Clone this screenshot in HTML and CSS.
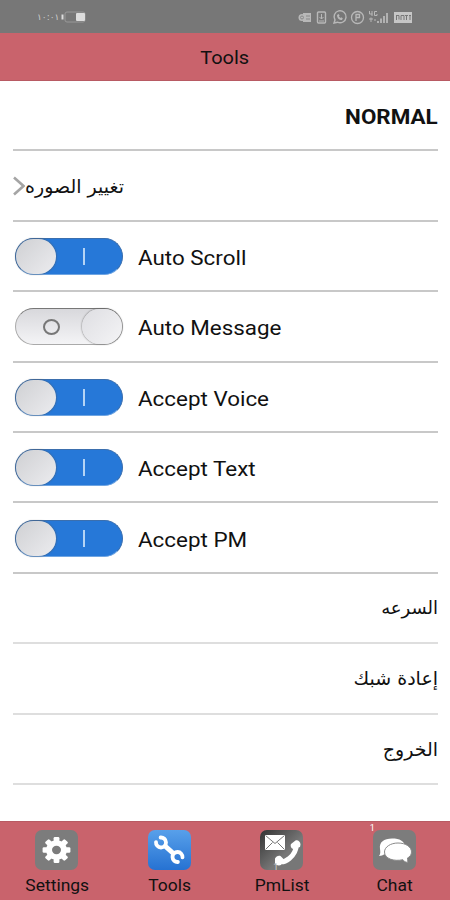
FILE: index.html
```html
<!DOCTYPE html>
<html lang="ar">
<head>
    <meta charset="UTF-8">
    <meta name="viewport" content="width=device-width, initial-scale=1.0">
    <title>Tools</title>
    <link rel="stylesheet" href="styles.css">
</head>
<body>
    <div class="status-bar">
        <div class="status-left">
            <span class="time">١٠:٠١</span>
            <svg class="battery" width="26" height="12" viewBox="0 0 26 12">
                <path d="M1.500 3.500v5" stroke="#ddd" stroke-width="2"/>
                <rect x="4" y="1" width="20" height="10" rx="2" fill="none" stroke="#999"/>
                <rect x="15" y="2" width="9" height="8" rx="1" fill="#ddd"/>
            </svg>
        </div>
        <svg class="status-icons" width="116" height="16" viewBox="0 0 116 16" fill="none" stroke="#b8b8b8">
            <path d="M6 6V4h8v9H6v-2z" fill="#b8b8b8" stroke="none"/>
            <circle cx="5" cy="8.500" r="3.500" fill="#b8b8b8" stroke="none"/>
            <circle cx="5" cy="8.500" r="1.500" stroke="#888"/>
            <path d="M9 7h4M9 10h4" stroke="#888"/>
            <rect x="20.500" y="3" width="8" height="11" rx="1" stroke-width="1.400"/>
            <path d="M24.500 5v5M22.500 8l2 2 2-2M22 12h5"/>
            <path d="M37 14l1-3a6 6 0 1 1 2.500 2.200z" stroke-width="1.400"/>
            <path d="M40 6c0 3 2 5 5 5l.8-1.800-1.600-1-.9.800-1.500-1.800.8-.7-1-1.500z" fill="#b8b8b8" stroke="none"/>
            <circle cx="60.500" cy="8.500" r="6" stroke-width="1.300"/>
            <path d="M59 12V5.500h3.500v3H59" stroke-width="1.300"/>
            <path d="M72.500 2v3h3M75 2v5M80 2.500h-2.500v4H80V5M72 10h4M74 8.500v4.500M77 11h2"/>
            <path d="M81 14v-2M84 14V9.500M87 14V7M90 14V4" stroke-width="1.800"/>
            <rect x="97" y="3" width="18" height="11" fill="#c6c6c6" stroke="none"/>
            <path d="M99 6.500h3v4M99.500 6v5M104 11V6.500h3V11M108 6.500h3M109.500 6v5M112 6.500h2M113 6v5" stroke="#777"/>
        </svg>
    </div>

    <header class="header"><span class="label">Tools</span></header>

    <main class="list">
        <div class="row end"><span class="label title">NORMAL</span></div>
        <div class="row">
            <svg class="chevron" width="12" height="20" viewBox="0 0 12 20">
                <path d="M1 1.500L10.500 10 1 18.500" fill="none" stroke="#a5a5a5" stroke-width="2.600"/>
            </svg>
            <span class="arabic" dir="rtl">تغيير الصوره</span>
        </div>
        <div class="row">
            <div class="switch on"><i class="knob"></i><i class="mark"></i></div>
            <span class="label">Auto Scroll</span>
        </div>
        <div class="row">
            <div class="switch off"><i class="mark"></i><i class="knob"></i></div>
            <span class="label">Auto Message</span>
        </div>
        <div class="row">
            <div class="switch on"><i class="knob"></i><i class="mark"></i></div>
            <span class="label">Accept Voice</span>
        </div>
        <div class="row">
            <div class="switch on"><i class="knob"></i><i class="mark"></i></div>
            <span class="label">Accept Text</span>
        </div>
        <div class="row">
            <div class="switch on"><i class="knob"></i><i class="mark"></i></div>
            <span class="label">Accept PM</span>
        </div>
        <div class="row end light"><span class="arabic narrow" dir="rtl">السرعه</span></div>
        <div class="row end light"><span class="arabic" dir="rtl">إعادة شبك</span></div>
        <div class="row end light"><span class="arabic" dir="rtl">الخروج</span></div>
    </main>

    <nav class="tabs">
        <div class="tab">
            <div class="icon">
                <svg width="43" height="40" viewBox="0 0 43 40">
                    <g transform="translate(21.500 20) scale(1.070 1)" fill="#fff">
                        <circle r="9.800"/>
                        <g id="teeth">
                            <rect x="-2.700" y="-13" width="5.400" height="26" rx="1.200"/>
                            <rect x="-13" y="-2.700" width="26" height="5.400" rx="1.200"/>
                        </g>
                        <use href="#teeth" transform="rotate(45)"/>
                        <circle r="4.200" fill="#7c7c7c"/>
                    </g>
                </svg>
            </div>
            <span class="label">Settings</span>
        </div>
        <div class="tab">
            <div class="icon active">
                <svg width="43" height="40" viewBox="0 0 43 40">
                    <g fill="none" stroke="#fff">
                        <path d="M16.500 15.500L26 24" stroke-width="5"/>
                        <path d="M12.600 7.500A5 5 0 1 1 8 12.100M29.900 32A5 5 0 1 1 34.500 27.400" stroke-width="3.800" stroke-linecap="round"/>
                    </g>
                </svg>
            </div>
            <span class="label">Tools</span>
        </div>
        <div class="tab">
            <div class="icon dark">
                <svg width="43" height="40" viewBox="0 0 43 40">
                    <rect x="5" y="5" width="20" height="15" fill="#fff"/>
                    <path d="M5.500 5.500l9.500 8 9.500-8M5.500 19.500l7-7M24.500 19.500l-7-7" fill="none" stroke="#777"/>
                    <path d="M18 31c6 3 18-4 18.500-17" fill="none" stroke="#fff" stroke-width="5" stroke-linecap="round"/>
                    <path d="M31 14l4.500-3.500c2-1 5 1 5 4l-.5 2.500-6.500 2c-2 0-3.500-3-2.500-5zM15 28.500c1-2 3.500-3.500 5.500-2.500l3 3-2.500 6c-2 1-5 .5-6-2z" fill="#fff"/>
                </svg>
                <span class="count low">1</span>
            </div>
            <span class="label">PmList</span>
        </div>
        <div class="tab">
            <div class="icon">
                <svg width="43" height="40" viewBox="0 0 43 40">
                    <path d="M6 26c1.500-2 1.500-4 1-7C6 12 11 8.500 19 8.500S31 11 32 16s-5 9-12 9c-4 0-6-1-8-1-2 1-4 2-6 2z" fill="#fff"/>
                    <path d="M25 13c8 0 13.500 4 13.500 9 0 3-2 5-4 6 0 2 .2 3 .2 4.500-3-.5-3.800-1.500-4.800-2.800-9 2-18.400-1-18.400-7.700 0-5 6-9 13.500-9z" fill="#fff" stroke="#8a8a8a"/>
                </svg>
                <span class="count">1</span>
            </div>
            <span class="label">Chat</span>
        </div>
    </nav>
</body>
</html>
```
FILE: styles.css
```css
* {
    margin: 0;
    padding: 0;
    box-sizing: border-box;
}

body {
    height: 900px;
    display: flex;
    flex-direction: column;
    background: #fff;
    color: #111;
    font-family: Roboto, "DejaVu Sans", sans-serif;
    font-size: 20px;
    overflow: hidden;
}

.label {
    display: inline-block;
    transform: scaleX(1.12);
    white-space: nowrap;
}

.status-bar {
    height: 33px;
    background: #777;
    display: flex;
    justify-content: space-between;
    align-items: center;
    padding: 0 37px;
}

.status-left {
    display: flex;
    align-items: center;
    gap: 2px;
}

.time {
    color: #ccc;
    font-family: "DejaVu Sans", sans-serif;
    font-size: 9px;
    line-height: 14px;
}

.header {
    height: 48px;
    padding-top: 2px;
    background: #c9636c;
    border-bottom: 1px solid #b85a63;
    display: flex;
    align-items: center;
    justify-content: center;
    font-size: 18.5px;
}

.header .label {
    transform: scaleX(1.08);
}

.list {
    height: 740px;
    padding: 0 12px 0 13px;
}

.row {
    height: 70.4px;
    border-bottom: 2px solid #c8c8c8;
    display: flex;
    align-items: center;
}

.row .label {
    padding-top: 4px;
    transform-origin: left;
}

.row.light {
    border-color: #dedede;
}

.row.end {
    justify-content: flex-end;
}

.row.end .label {
    transform-origin: right;
}

.title {
    font-weight: bold;
}

.arabic {
    font-family: "DejaVu Sans", sans-serif;
    font-size: 19px;
}

.arabic.narrow {
    font-size: 18px;
}

.switch {
    width: 108px;
    height: 37px;
    margin: 1px 15px 0 2px;
    border-radius: 19px;
    display: flex;
    align-items: center;
    border: 1px solid #aaa;
    border-top-color: #777;
}

.switch.on {
    background: #2678d8;
    border-color: #3b6fae;
    border-bottom-color: #6fa5e2;
}

.switch.off {
    background: linear-gradient(#d8d8dc, #f4f4f6);
    justify-content: flex-end;
}

.knob {
    width: 40px;
    height: 35px;
    border-radius: 20px;
    background: linear-gradient(135deg, #cfd0d3, #ececef);
    box-shadow: 0 0 2px #555;
}

.off .knob {
    background: linear-gradient(135deg, #dedee2, #f4f4f6);
}

.on .mark {
    width: 2px;
    height: 17px;
    margin-left: 27px;
    background: #b5d4f5;
}

.off .mark {
    width: 17px;
    height: 16px;
    margin-right: 22px;
    border: 2px solid #777;
    border-radius: 50%;
}

.tabs {
    height: 79px;
    background: #c9636c;
    border-top: 1px solid #b85a63;
    display: grid;
    grid-template-columns: repeat(4, 1fr);
}

.tab {
    display: flex;
    flex-direction: column;
    align-items: center;
    padding: 8px 0 0 1px;
    font-size: 16px;
}

.tab .label {
    transform: scaleX(1.09);
}

.icon {
    position: relative;
    width: 43px;
    height: 40px;
    margin-bottom: 6px;
    border-radius: 7px;
    background: #7c7c7c;
}

.icon svg {
    display: block;
}

.icon.active {
    background: linear-gradient(#58a0ea, #2672d2);
}

.icon.dark {
    background: linear-gradient(135deg, #333, #777 60%);
}

.count {
    position: absolute;
    left: -3px;
    top: -7px;
    color: #fff;
    font-size: 9px;
    line-height: 10px;
}

.count.low {
    left: 13px;
    top: 32px;
    color: #ccc;
}
```
